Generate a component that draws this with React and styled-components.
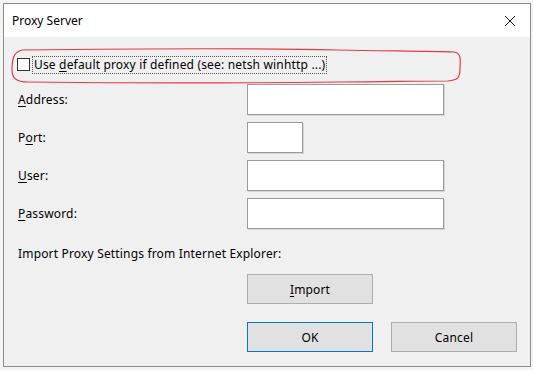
import React from "react";
import styled, { createGlobalStyle } from "styled-components";

const Global = createGlobalStyle`
  html, body { margin: 0; padding: 0; background: #f4f4f4; }
  body { font-family: "Noto Sans", "Segoe UI", sans-serif; font-size: 12px; color: #000; }
  #root { width: 533px; height: 370px; }
`;

const Page = styled.div`
  width: 533px;
  height: 370px;
  padding: 3px 0 0 3px;
  box-sizing: border-box;
`;

const Window = styled.div`
  position: relative;
  width: 528px;
  height: 364px;
  box-sizing: border-box;
  border: 1px solid #8c8c8c;
  background: #f0f0f0;
  display: flex;
  flex-direction: column;
`;

const TitleBar = styled.div`
  height: 33px;
  background: #fff;
  display: flex;
  align-items: center;
  justify-content: space-between;
  padding: 0 14px 0 8px;
  flex-shrink: 0;
`;

const Title = styled.span`
  font-size: 12px;
  color: #000;
  margin-top: -1px;
`;

const Body = styled.div`
  flex: 1;
  display: flex;
  flex-direction: column;
  padding: 0 0 0 14px;
  letter-spacing: 0.17px;
`;

const CheckRow = styled.label`
  display: flex;
  align-items: center;
  height: 17px;
  margin-top: 19px;
  margin-left: -1px;
`;

const Box = styled.span`
  width: 13px;
  height: 13px;
  box-sizing: border-box;
  border: 1px solid #333;
  background: #fff;
  flex-shrink: 0;
`;

const Focus = styled.span`
  margin-left: 3px;
  padding: 0 1px;
  outline: 1px dotted #555;
  line-height: 16px;
`;

const Key = styled.u`
  text-decoration: underline;
  text-underline-offset: 2px;
`;

const FormGrid = styled.div`
  display: grid;
  grid-template-columns: 229px auto;
  row-gap: 7px;
  margin-top: 11px;
  align-items: center;
`;

const Label = styled.span`
  line-height: 16px;
`;

const Input = styled.div`
  width: ${(p) => p.$w}px;
  height: 31px;
  box-sizing: border-box;
  background: #fff;
  border: 1px solid #9a9a9a;
  box-shadow: 1px 1px 0 #d6d6d6;
`;

const ImportLabel = styled.div`
  line-height: 16px;
  margin-top: 17px;
`;

const ButtonRow = styled.div`
  display: flex;
  gap: 18px;
  margin-left: 229px;
  margin-top: ${(p) => p.$top}px;
`;

const Button = styled.div`
  width: 126px;
  height: 30px;
  box-sizing: border-box;
  background: #e1e1e1;
  border: 1px solid ${(p) => (p.$default ? "#0078d7" : "#adadad")};
  display: flex;
  align-items: center;
  justify-content: center;
`;

const Ellipse = styled.svg`
  position: absolute;
  left: 4px;
  top: 44px;
  pointer-events: none;
`;

function Close() {
  return (
    <svg width="12" height="12" viewBox="0 0 12 12">
      <path d="M1 1 L11 11 M11 1 L1 11" stroke="#1a1a1a" strokeWidth="1" fill="none" />
    </svg>
  );
}

export default function App() {
  return (
    <>
      <Global />
      <Page>
        <Window>
          <TitleBar>
            <Title>Proxy Server</Title>
            <Close />
          </TitleBar>
          <Body>
            <CheckRow>
              <Box />
              <Focus>
                Use <Key>d</Key>efault proxy if defined (see: netsh winhttp ...)
              </Focus>
            </CheckRow>
            <FormGrid>
              <Label><Key>A</Key>ddress:</Label>
              <Input $w={197} />
              <Label>P<Key>o</Key>rt:</Label>
              <Input $w={56} />
              <Label><Key>U</Key>ser:</Label>
              <Input $w={197} />
              <Label><Key>P</Key>assword:</Label>
              <Input $w={197} />
            </FormGrid>
            <ImportLabel>Import Proxy Settings from Internet Explorer:</ImportLabel>
            <ButtonRow $top={12}>
              <Button><span><Key>I</Key>mport</span></Button>
            </ButtonRow>
            <ButtonRow $top={18}>
              <Button $default>OK</Button>
              <Button>Cancel</Button>
            </ButtonRow>
          </Body>
          <Ellipse width="456" height="38" viewBox="0 0 456 38">
            <path
              d="M14 2 C 100 1, 250 0, 330 2 C 380 3, 420 3, 446 4 C 452 5, 453 9, 452 20 C 452 30, 450 32, 440 33 C 400 33, 380 34, 330 34 C 250 35, 100 35, 20 34 C 8 34, 4 30, 4 22 C 4 10, 6 4, 14 2 Z"
              stroke="#e53a45"
              strokeWidth="1.2"
              fill="none"
            />
          </Ellipse>
        </Window>
      </Page>
    </>
  );
}
